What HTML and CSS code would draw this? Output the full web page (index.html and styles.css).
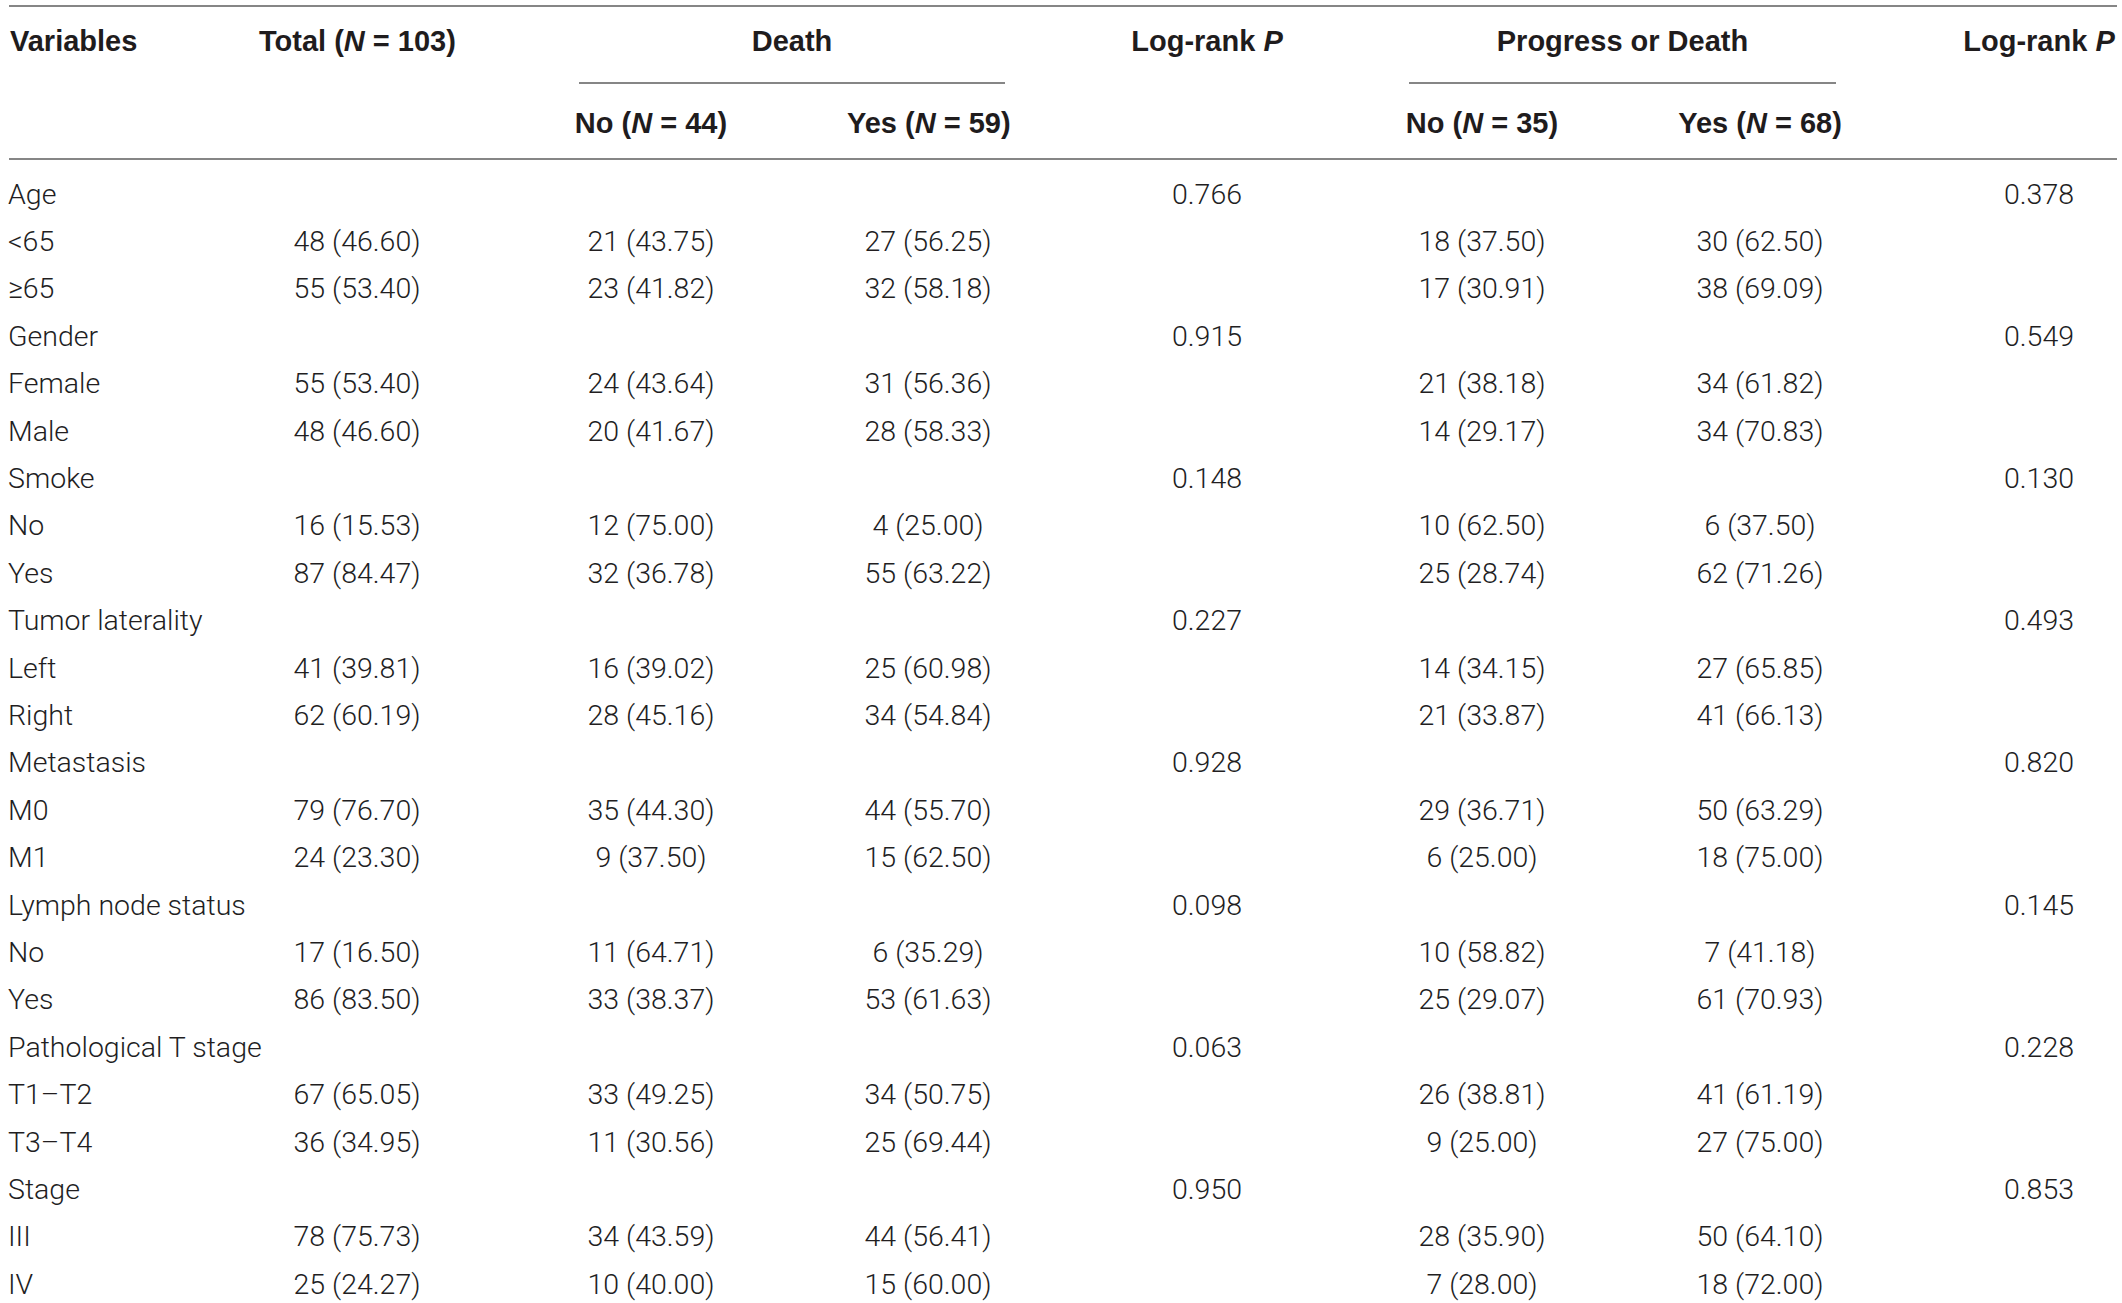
FILE: index.html
```html
<!DOCTYPE html>
<html lang="en">
<head>
    <meta charset="UTF-8">
    <title>Survival by clinical variables</title>
    <link rel="stylesheet" href="styles.css">
</head>
<body>
    <div class="table">
        <div class="head">
            <div class="th var">Variables</div>
            <div class="th">Total (<i>N</i> = 103)</div>
            <div class="th group death">Death</div>
            <div class="th">Log-rank <i>P</i></div>
            <div class="th group pod">Progress or Death</div>
            <div class="th">Log-rank <i>P</i></div>
            <div class="th sub c3">No (<i>N</i> = 44)</div>
            <div class="th sub c4">Yes (<i>N</i> = 59)</div>
            <div class="th sub c6">No (<i>N</i> = 35)</div>
            <div class="th sub c7">Yes (<i>N</i> = 68)</div>
        </div>
        <div class="rows">
            <div class="row"><span>Age</span><span></span><span></span><span></span><span>0.766</span><span></span><span></span><span>0.378</span></div>
            <div class="row"><span>&lt;65</span><span>48 (46.60)</span><span>21 (43.75)</span><span>27 (56.25)</span><span></span><span>18 (37.50)</span><span>30 (62.50)</span><span></span></div>
            <div class="row"><span>&ge;65</span><span>55 (53.40)</span><span>23 (41.82)</span><span>32 (58.18)</span><span></span><span>17 (30.91)</span><span>38 (69.09)</span><span></span></div>
            <div class="row"><span>Gender</span><span></span><span></span><span></span><span>0.915</span><span></span><span></span><span>0.549</span></div>
            <div class="row"><span>Female</span><span>55 (53.40)</span><span>24 (43.64)</span><span>31 (56.36)</span><span></span><span>21 (38.18)</span><span>34 (61.82)</span><span></span></div>
            <div class="row"><span>Male</span><span>48 (46.60)</span><span>20 (41.67)</span><span>28 (58.33)</span><span></span><span>14 (29.17)</span><span>34 (70.83)</span><span></span></div>
            <div class="row"><span>Smoke</span><span></span><span></span><span></span><span>0.148</span><span></span><span></span><span>0.130</span></div>
            <div class="row"><span>No</span><span>16 (15.53)</span><span>12 (75.00)</span><span>4 (25.00)</span><span></span><span>10 (62.50)</span><span>6 (37.50)</span><span></span></div>
            <div class="row"><span>Yes</span><span>87 (84.47)</span><span>32 (36.78)</span><span>55 (63.22)</span><span></span><span>25 (28.74)</span><span>62 (71.26)</span><span></span></div>
            <div class="row"><span>Tumor laterality</span><span></span><span></span><span></span><span>0.227</span><span></span><span></span><span>0.493</span></div>
            <div class="row"><span>Left</span><span>41 (39.81)</span><span>16 (39.02)</span><span>25 (60.98)</span><span></span><span>14 (34.15)</span><span>27 (65.85)</span><span></span></div>
            <div class="row"><span>Right</span><span>62 (60.19)</span><span>28 (45.16)</span><span>34 (54.84)</span><span></span><span>21 (33.87)</span><span>41 (66.13)</span><span></span></div>
            <div class="row"><span>Metastasis</span><span></span><span></span><span></span><span>0.928</span><span></span><span></span><span>0.820</span></div>
            <div class="row"><span>M0</span><span>79 (76.70)</span><span>35 (44.30)</span><span>44 (55.70)</span><span></span><span>29 (36.71)</span><span>50 (63.29)</span><span></span></div>
            <div class="row"><span>M1</span><span>24 (23.30)</span><span>9 (37.50)</span><span>15 (62.50)</span><span></span><span>6 (25.00)</span><span>18 (75.00)</span><span></span></div>
            <div class="row"><span>Lymph node status</span><span></span><span></span><span></span><span>0.098</span><span></span><span></span><span>0.145</span></div>
            <div class="row"><span>No</span><span>17 (16.50)</span><span>11 (64.71)</span><span>6 (35.29)</span><span></span><span>10 (58.82)</span><span>7 (41.18)</span><span></span></div>
            <div class="row"><span>Yes</span><span>86 (83.50)</span><span>33 (38.37)</span><span>53 (61.63)</span><span></span><span>25 (29.07)</span><span>61 (70.93)</span><span></span></div>
            <div class="row"><span>Pathological T stage</span><span></span><span></span><span></span><span>0.063</span><span></span><span></span><span>0.228</span></div>
            <div class="row"><span>T1&ndash;T2</span><span>67 (65.05)</span><span>33 (49.25)</span><span>34 (50.75)</span><span></span><span>26 (38.81)</span><span>41 (61.19)</span><span></span></div>
            <div class="row"><span>T3&ndash;T4</span><span>36 (34.95)</span><span>11 (30.56)</span><span>25 (69.44)</span><span></span><span>9 (25.00)</span><span>27 (75.00)</span><span></span></div>
            <div class="row"><span>Stage</span><span></span><span></span><span></span><span>0.950</span><span></span><span></span><span>0.853</span></div>
            <div class="row"><span>III</span><span>78 (75.73)</span><span>34 (43.59)</span><span>44 (56.41)</span><span></span><span>28 (35.90)</span><span>50 (64.10)</span><span></span></div>
            <div class="row"><span>IV</span><span>25 (24.27)</span><span>10 (40.00)</span><span>15 (60.00)</span><span></span><span>7 (28.00)</span><span>18 (72.00)</span><span></span></div>
        </div>
    </div>
</body>
</html>
```

FILE: styles.css
```css
body {
    margin: 0;
    background-color: #fff;
    color: #231f20;
}
.table {
    margin: 5px 0 0 9px;
    width: 2108px;
}
.head,
.row {
    display: grid;
    grid-template-columns: 250px 196px 392px 162px 396px 154px 402px 156px;
}
.head {
    grid-template-rows: 77px 74px;
    border-top: 2px solid #868686;
    border-bottom: 2px solid #868686;
    font-family: "Liberation Sans", Arial, sans-serif;
    font-weight: bold;
    font-size: 29px;
    line-height: 34px;
    color: #1f1c1d;
}
.th {
    text-align: center;
    padding-top: 17px;
    white-space: nowrap;
}
.th.var {
    text-align: left;
    padding-left: 1px;
}
.group {
    grid-column: span 2;
    border-bottom: 2px solid #868686;
}
.death {
    margin: 0 4px 0 124px;
}
.pod {
    margin: 0 125px 0 4px;
}
.sub {
    grid-row: 2;
    padding-top: 22px;
}
.c3 { grid-column: 3; }
.c4 { grid-column: 4; }
.c6 { grid-column: 6; }
.c7 { grid-column: 7; }
.rows {
    padding-top: 11px;
    font-family: Roboto, "Liberation Sans", sans-serif;
    font-weight: 300;
    font-size: 28.5px;
    line-height: 34px;
    color: #221e1f;
}
.row {
    height: 47.4px;
    align-items: center;
}
.row span {
    text-align: center;
    white-space: nowrap;
}
.row span:first-child {
    text-align: left;
    margin-left: -1px;
}
```
